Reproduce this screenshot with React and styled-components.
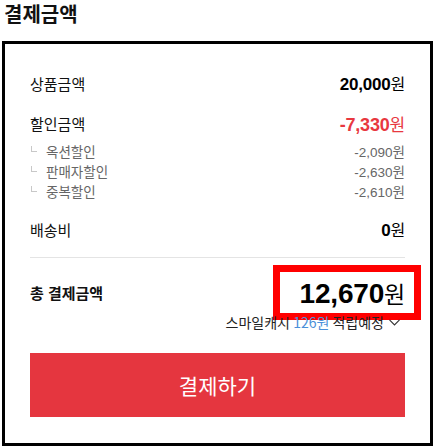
import React from 'react';
import styled, { createGlobalStyle } from 'styled-components';

const GlobalStyle = createGlobalStyle`
  html, body {
    margin: 0;
    padding: 0;
    background: #fff;
  }
  body {
    font-family: "Liberation Sans", "Noto Sans CJK KR", sans-serif;
    color: #111;
  }
`;

const Page = styled.div`
  padding: 0 0 0 2px;
`;

const Title = styled.h2`
  margin: 0 0 10px 2px;
  font-size: 20px;
  line-height: 31px;
  font-weight: 700;
  color: #111;
`;

const Box = styled.section`
  border: 3px solid #000;
  padding: 27px 25px 26px 25px;
`;

const Row = styled.div`
  display: flex;
  align-items: center;
  justify-content: space-between;
  height: 24px;
  margin-top: ${({ $gap }) => $gap || 0}px;
`;

const Label = styled.span`
  font-size: 15px;
  font-weight: ${({ $bold }) => ($bold ? 700 : 400)};
  color: #111;
`;

const Amount = styled.span`
  font-size: ${({ $size }) => $size || 17}px;
  font-weight: 700;
  color: ${({ $red }) => ($red ? '#e8383f' : '#000')};
  letter-spacing: -0.2px;
`;

const Won = styled.span`
  font-weight: 400;
  font-size: ${({ $size }) => $size || 16}px;
  font-family: "Noto Sans CJK KR", sans-serif;
`;

const SubList = styled.ul`
  list-style: none;
  margin: 6px 0 0;
  padding: 0;
`;

const SubRow = styled.li`
  display: flex;
  align-items: center;
  justify-content: space-between;
  height: 20px;
  font-size: 13.5px;
  color: #666;
`;

const SubLabel = styled.span`
  display: flex;
  align-items: center;
  &::before {
    content: '';
    width: 5px;
    height: 5px;
    margin: -4px 9px 0 1px;
    border-left: 1px solid #c8c8c8;
    border-bottom: 1px solid #c8c8c8;
  }
`;

const Divider = styled.hr`
  border: 0;
  border-top: 1px solid #e4e4e4;
  margin: 16px 0 0;
`;

const TotalRow = styled.div`
  display: flex;
  align-items: center;
  justify-content: space-between;
  height: 41px;
  margin-top: 14px;
`;

const Highlight = styled.div`
  display: flex;
  align-items: center;
  height: 41px;
  padding: 0 9px 0 20px;
  margin: -7px -16px -7px 0;
  border: 7px solid #ff0000;
`;

const Cash = styled.div`
  display: flex;
  justify-content: flex-end;
  align-items: center;
  gap: 5px;
  height: 16px;
  margin-top: 1px;
  font-size: 14px;
  color: #222;
  font-family: "Noto Sans CJK KR", sans-serif;
`;

const CashPoint = styled.span`
  color: #4a90d9;
`;

const Chevron = styled.svg`
  width: 11px;
  height: 7px;
  margin-right: 5px;
`;

const PayButton = styled.button`
  display: block;
  width: 100%;
  height: 64px;
  margin-top: 23px;
  border: 0;
  background: #e5363f;
  color: #fff;
  font-family: "Noto Sans CJK KR", sans-serif;
  font-size: 21px;
  cursor: pointer;
`;

const discounts = [
  { label: '옥션할인', amount: '-2,090원' },
  { label: '판매자할인', amount: '-2,630원' },
  { label: '중복할인', amount: '-2,610원' },
];

export default function App() {
  return (
    <Page>
      <GlobalStyle />
      <Title>결제금액</Title>
      <Box>
        <Row>
          <Label>상품금액</Label>
          <Amount>20,000<Won>원</Won></Amount>
        </Row>
        <Row $gap={16}>
          <Label>할인금액</Label>
          <Amount $red $size={18}>-7,330<Won $size={17}>원</Won></Amount>
        </Row>
        <SubList>
          {discounts.map((d) => (
            <SubRow key={d.label}>
              <SubLabel>{d.label}</SubLabel>
              <span>{d.amount}</span>
            </SubRow>
          ))}
        </SubList>
        <Row $gap={16}>
          <Label>배송비</Label>
          <Amount>0<Won>원</Won></Amount>
        </Row>
        <Divider />
        <TotalRow>
          <Label $bold>총 결제금액</Label>
          <Highlight>
            <Amount $size={28}>12,670<Won $size={23}>원</Won></Amount>
          </Highlight>
        </TotalRow>
        <Cash>
          <span>스마일캐시 <CashPoint>126원</CashPoint> 적립예정</span>
          <Chevron viewBox="0 0 11 7">
            <path d="M0.5 0.8 L5.5 6 L10.5 0.8" fill="none" stroke="#333" strokeWidth="1.1" />
          </Chevron>
        </Cash>
        <PayButton>결제하기</PayButton>
      </Box>
    </Page>
  );
}
